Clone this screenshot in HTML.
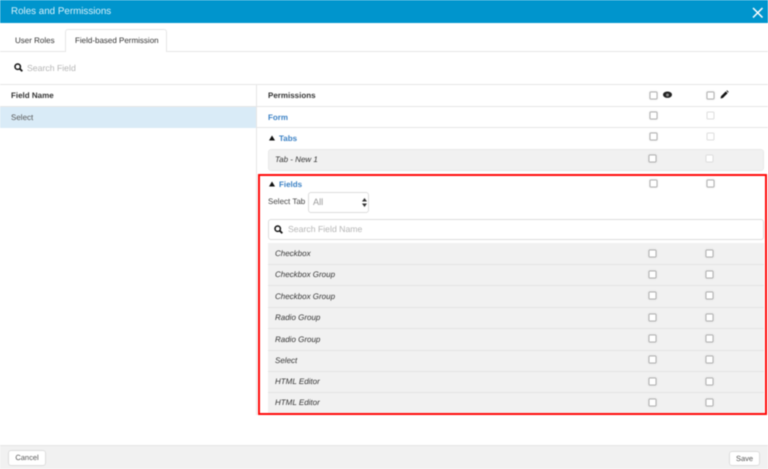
<!DOCTYPE html>
<html><head><meta charset="utf-8"><style>
html,body{margin:0;padding:0;width:768px;height:469px;overflow:hidden;background:#fff}
body{font-family:"Liberation Sans",sans-serif;font-size:8px;color:#333;position:relative;text-rendering:geometricPrecision}
#w{position:absolute;left:0;top:0;width:768px;height:469px;filter:blur(.45px)}
.a{position:absolute}
.t{position:absolute;white-space:nowrap;line-height:12px;margin-top:1px}
.t.n{margin-top:0}
.cb{position:absolute;width:5.500px;height:5.500px;border:1px solid #b2b2b2;border-radius:1.500px;background:#fff;box-shadow:0 0 1.500px #c4c4c4;transform:translate(-.5px,-.5px)}
.cb.d{border-color:#ddd;box-shadow:none}
.hl{position:absolute;height:1px;background:#e6e6e6}
.b{font-weight:bold}
.lk{font-weight:bold;color:#3a80c4}
.i{font-style:italic}
.row{position:absolute;left:268px;width:496px;background:#f1f1f1;border-bottom:1px solid #e4e4e4;box-sizing:border-box}
.btn{position:absolute;background:#fff;border:1px solid #ddd;border-radius:3px;box-sizing:border-box;text-align:center;color:#555;line-height:14px;font-size:7.500px}
</style></head><body><div id="w">
<div class="a" style="left:0;top:0;width:768px;height:23px;background:#0095cd"></div>
<div class="t" style="left:11px;top:4.500px;color:#d8f1fb;font-size:9.800px">Roles and Permissions</div>
<svg class="a" style="left:751px;top:6px" width="13" height="13" viewBox="0 0 13 13"><path d="M2 2L11.500 11.500M11.500 2L2 11.500" stroke="#fff" stroke-width="1.500" fill="none"/></svg>

<div class="hl" style="left:0;top:50.500px;width:768px"></div>
<div class="a" style="left:65px;top:29px;width:102px;height:23px;background:#fff;border:1px solid #e6e6e6;border-bottom:none;border-radius:3px 3px 0 0;box-sizing:border-box"></div>
<div class="t" style="left:15px;top:34px">User Roles</div>
<div class="t" style="left:75px;top:34px">Field-based Permission</div>

<svg class="a" style="left:14px;top:63px" width="9" height="9" viewBox="0 0 9 9"><circle cx="3.700" cy="3.700" r="2.700" fill="none" stroke="#111" stroke-width="1.500"/><path d="M5.800 5.800L8.300 8.300" stroke="#111" stroke-width="1.800"/></svg>
<div class="t n" style="left:27px;top:61.500px;color:#b5b5b5;font-size:8.700px">Search Field</div>

<div class="hl" style="left:0;top:84px;width:768px"></div>
<div class="hl" style="left:0;top:106px;width:768px"></div>
<div class="t b" style="left:11px;top:89px">Field Name</div>
<div class="t b" style="left:268px;top:89px">Permissions</div>
<div class="a" style="left:0;top:107px;width:256px;height:20.500px;background:#d9ebf7"></div>
<div class="t" style="left:11px;top:111px;color:#555">Select</div>
<div class="a" style="left:256px;top:84px;width:1px;height:331px;background:#e6e6e6"></div>
<div class="hl" style="left:257px;top:127px;width:511px"></div>

<div class="cb" style="left:650px;top:92px"></div>
<svg class="a" style="left:663px;top:90.500px" width="9" height="8" viewBox="0 0 9 8"><ellipse cx="4.500" cy="3.700" rx="4.500" ry="3.200" fill="#222"/><circle cx="4.500" cy="4" r="1.500" fill="#888"/></svg>
<div class="cb" style="left:707px;top:92px"></div>
<svg class="a" style="left:720px;top:90px" width="9" height="9" viewBox="0 0 9 9"><path d="M1 6.200L5.800 1.400L7.600 3.200L2.800 8L.5 8.500Z" fill="#111"/><path d="M6.400 .9L7.100 .3L8.700 1.900L8.100 2.600Z" fill="#111"/></svg>

<div class="t lk" style="left:268px;top:110.500px">Form</div>
<div class="cb" style="left:650px;top:112px"></div>
<div class="cb d" style="left:707px;top:112px"></div>

<svg class="a" style="left:269px;top:135px" width="6" height="6"><path d="M3 0.500L6 5.500H0Z" fill="#111"/></svg>
<div class="t lk" style="left:279px;top:132px">Tabs</div>
<div class="cb" style="left:650px;top:133px"></div>
<div class="cb d" style="left:707px;top:133px"></div>

<div class="a" style="left:268px;top:148.500px;width:496px;height:22px;background:#f1f1f1;border:1px solid #e9e9e9;border-radius:3px;box-sizing:border-box"></div>
<div class="t i" style="left:275px;top:153px">Tab - New 1</div>
<div class="cb" style="left:649px;top:155px"></div>
<div class="cb d" style="left:706px;top:155px"></div>

<div class="a" style="left:258px;top:174px;width:509px;height:241px;border:2px solid #ff0a0a;box-sizing:border-box"></div>

<svg class="a" style="left:269px;top:181px" width="6" height="6"><path d="M3 0.500L6 5.500H0Z" fill="#111"/></svg>
<div class="t lk" style="left:279px;top:178px">Fields</div>
<div class="cb" style="left:650px;top:180px"></div>
<div class="cb" style="left:707px;top:180px"></div>

<div class="t n" style="left:268px;top:195.500px;color:#444">Select Tab</div>
<div class="a" style="left:307.500px;top:192px;width:61px;height:21px;background:#fff;border:1px solid #ddd;border-radius:3px;box-sizing:border-box"></div>
<div class="t n" style="left:313px;top:195.500px;color:#999;font-size:9.200px">All</div>
<svg class="a" style="left:361.500px;top:198px" width="5" height="9"><path d="M2.500 0L5 3.500H0ZM2.500 9L5 5.500H0Z" fill="#333"/></svg>

<div class="a" style="left:268px;top:219px;width:496px;height:21px;background:#fff;border:1px solid #ddd;border-radius:3px;box-sizing:border-box"></div>
<svg class="a" style="left:274px;top:225px" width="9" height="9" viewBox="0 0 9 9"><circle cx="3.700" cy="3.700" r="2.700" fill="none" stroke="#111" stroke-width="1.500"/><path d="M5.800 5.800L8.300 8.300" stroke="#111" stroke-width="1.800"/></svg>
<div class="t n" style="left:288px;top:223px;color:#b5b5b5;font-size:8.700px">Search Field Name</div>

<div class="row" style="top:243px;height:22px"></div>
<div class="row" style="top:265px;height:21px"></div>
<div class="row" style="top:286px;height:22px"></div>
<div class="row" style="top:308px;height:21px"></div>
<div class="row" style="top:329px;height:21.500px"></div>
<div class="row" style="top:350.500px;height:21.500px"></div>
<div class="row" style="top:372px;height:21px"></div>
<div class="row" style="top:393px;height:20px;border-bottom:none"></div>

<div class="t i" style="left:275px;top:247px">Checkbox</div>
<div class="t i" style="left:275px;top:268px">Checkbox Group</div>
<div class="t i" style="left:275px;top:290px">Checkbox Group</div>
<div class="t i" style="left:275px;top:311px">Radio Group</div>
<div class="t i" style="left:275px;top:333px">Radio Group</div>
<div class="t i" style="left:275px;top:354px">Select</div>
<div class="t i" style="left:275px;top:375px">HTML Editor</div>
<div class="t i" style="left:275px;top:396px">HTML Editor</div>

<div class="cb" style="left:649px;top:250px"></div><div class="cb" style="left:706px;top:250px"></div>
<div class="cb" style="left:649px;top:271px"></div><div class="cb" style="left:706px;top:271px"></div>
<div class="cb" style="left:649px;top:292px"></div><div class="cb" style="left:706px;top:292px"></div>
<div class="cb" style="left:649px;top:314px"></div><div class="cb" style="left:706px;top:314px"></div>
<div class="cb" style="left:649px;top:335px"></div><div class="cb" style="left:706px;top:335px"></div>
<div class="cb" style="left:649px;top:356px"></div><div class="cb" style="left:706px;top:356px"></div>
<div class="cb" style="left:649px;top:378px"></div><div class="cb" style="left:706px;top:378px"></div>
<div class="cb" style="left:649px;top:399px"></div><div class="cb" style="left:706px;top:399px"></div>

<div class="a" style="left:0;top:445px;width:768px;height:24px;background:#f1f1f1;border-top:1px solid #e6e6e6;box-sizing:border-box"></div>
<div class="btn" style="left:8px;top:450px;width:38px;height:16px">Cancel</div>
<div class="btn" style="left:729px;top:450.500px;width:31px;height:15px;line-height:13px">Save</div>
</div></body></html>
